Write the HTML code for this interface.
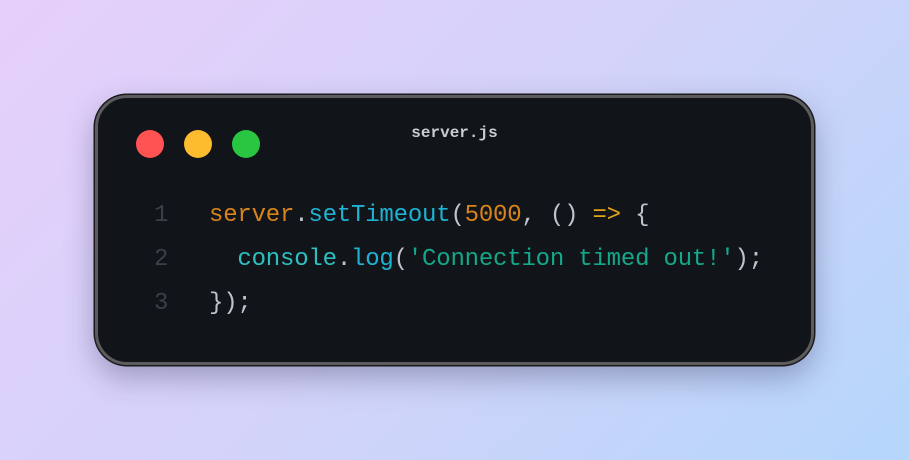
<!DOCTYPE html>
<html><head><style>
html,body{margin:0;padding:0}
body{width:909px;height:460px;overflow:hidden;background:linear-gradient(135deg,#e6cffb 0%,#d3d3f9 50%,#b5d6fb 100%);position:relative;font-family:"Liberation Mono",monospace}
.card{position:absolute;left:95px;top:95px;width:713px;height:264px;background:#111418;border:3px solid #5c5c5e;box-shadow:0 0 0 1.5px #1a1a1c,0 12px 30px rgba(40,40,80,.35);border-radius:32px}
.dot{position:absolute;top:32px;width:28px;height:28px;border-radius:50%}
.title{position:absolute;top:26px;left:0;right:0;text-align:center;color:#c9ccd1;font-size:16px;font-weight:bold}
.code{position:absolute;left:0;top:96px;font-size:24px;line-height:44px;letter-spacing:-0.2px;white-space:pre}
.ln{display:inline-block;width:111px;text-align:left;padding-left:56px;box-sizing:border-box;color:#3b4048;letter-spacing:0}
.o{color:#d8841c}.c{color:#1fb3d3}.p{color:#bfc4cc}.s{color:#14a88a}.a{color:#e0a419}.t{color:#2cc0c0}
</style></head><body>
<div class="card">
<div class="dot" style="left:38px;background:#fe5352"></div>
<div class="dot" style="left:86px;background:#fdbb2e"></div>
<div class="dot" style="left:134px;background:#29c741"></div>
<div class="title">server.js</div>
<div class="code"><div><span class="ln">1</span><span class="o">server</span><span class="p">.</span><span class="c">setTimeout</span><span class="p">(</span><span class="o">5000</span><span class="p">, () </span><span class="a">=&gt;</span><span class="p"> {</span></div><div><span class="ln">2</span>  <span class="t">console</span><span class="p">.</span><span class="c">log</span><span class="p">(</span><span class="s">'Connection timed out!'</span><span class="p">);</span></div><div><span class="ln">3</span><span class="p">});</span></div></div>
</div>
</body></html>
